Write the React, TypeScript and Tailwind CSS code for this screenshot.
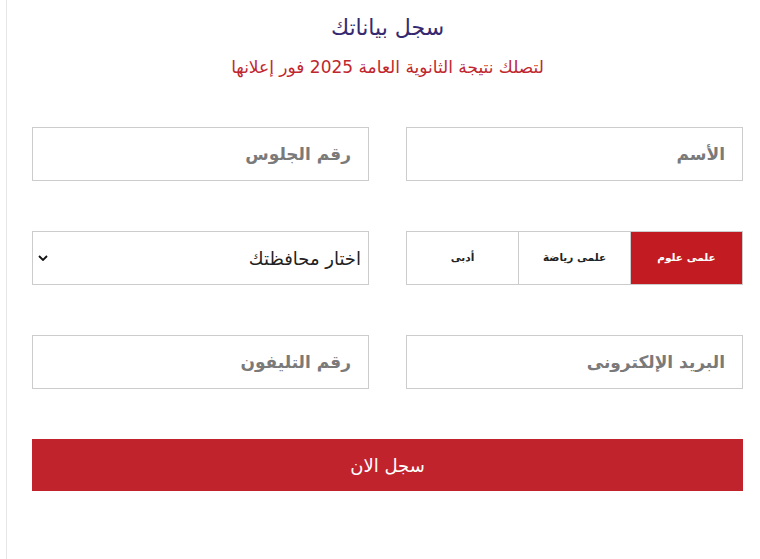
import { useState } from "react";

const TRACKS = ["علمى علوم", "علمى رياضة", "أدبى"];

function Field({ placeholder }: { placeholder: string }) {
    return (
        <input
            type="text"
            placeholder={placeholder}
            className="h-[54px] w-full border border-[#cccccc] bg-white px-[17px] text-[17px] font-bold text-[#444] outline-none placeholder:text-[#7a7a7a]"
        />
    );
}

export default function App() {
    const [track, setTrack] = useState(TRACKS[0]);

    return (
        <div
            dir="rtl"
            className="min-h-[559px] w-[760px] bg-white"
            style={{ fontFamily: '"DejaVu Sans", "Noto Sans", sans-serif' }}
        >
            <div className="ml-[6px] min-h-[559px] border-l border-[#e6e6e6] pl-[25px] pr-[17px]">
                {/* Heading */}
                <div className="pt-[13px] text-center">
                    <h1 className="text-[22px] leading-[30px] text-[#35296f]">سجل بياناتك</h1>
                    <p className="mt-[12px] text-[17px] leading-[24px] text-[#c0262e]">
                        لتصلك نتيجة الثانوية العامة 2025 فور إعلانها
                    </p>
                </div>

                {/* Form */}
                <form className="mt-[48px] grid grid-cols-2 gap-x-[37px] gap-y-[50px]">
                    <Field placeholder="الأسم" />
                    <Field placeholder="رقم الجلوس" />

                    <div className="flex h-[54px] border border-[#cccccc]">
                        {TRACKS.map((t, i) => (
                            <button
                                key={t}
                                type="button"
                                onClick={() => setTrack(t)}
                                className={`flex-1 text-[10.5px] font-bold ${i > 0 ? "border-r border-[#cccccc]" : ""} ${
                                    track === t ? "bg-[#c21c22] text-white" : "bg-white text-[#222]"
                                }`}
                            >
                                {t}
                            </button>
                        ))}
                    </div>

                    <div className="relative h-[54px]">
                        <select className="h-full w-full appearance-none border border-[#cccccc] bg-white px-[7px] text-[18px] text-[#222] outline-none">
                            <option>اختار محافظتك</option>
                            <option>القاهرة</option>
                            <option>الجيزة</option>
                            <option>الإسكندرية</option>
                        </select>
                        <svg
                            viewBox="0 0 10 6"
                            className="pointer-events-none absolute left-[6px] top-[24px] h-[6px] w-[10px]"
                        >
                            <path d="M1 1l4 4 4-4" fill="none" stroke="#111" strokeWidth="1.8" />
                        </svg>
                    </div>

                    <Field placeholder="البريد الإلكترونى" />
                    <Field placeholder="رقم التليفون" />

                    <button
                        type="button"
                        className="col-span-2 h-[52px] bg-[#c1232d] text-[18px] text-white"
                    >
                        سجل الان
                    </button>
                </form>
            </div>
        </div>
    );
}
